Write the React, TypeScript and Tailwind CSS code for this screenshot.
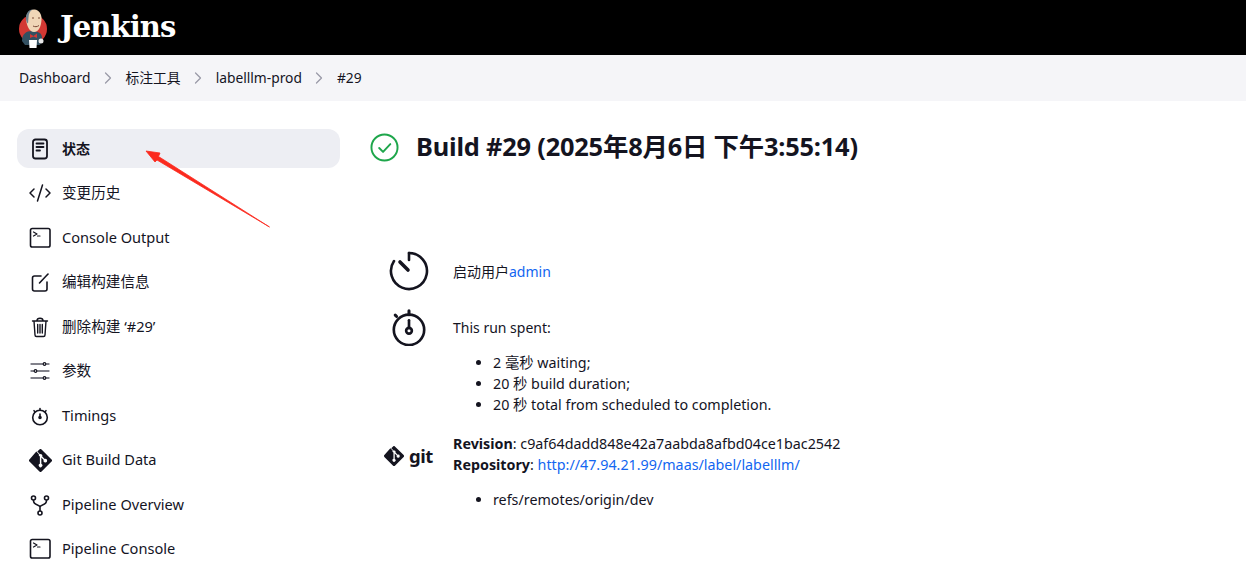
import { ReactNode } from 'react'
import { ChevronRight, Code2 } from 'lucide-react'

const font = '[font-family:"Noto_Sans","Noto_Sans_CJK_SC",sans-serif]'

function Icon({ children, className = 'w-6 h-6' }: { children: ReactNode; className?: string }) {
  return (
    <svg viewBox="0 0 24 24" fill="none" stroke="#14141f" strokeWidth="1.6" strokeLinecap="round" strokeLinejoin="round" className={className}>
      {children}
    </svg>
  )
}

const GitDiamond = ({ className }: { className: string }) => (
  <svg viewBox="0 0 24 24" className={className}>
    <path fill="#14141f" d="M23.55 10.93 13.07.45a1.55 1.55 0 0 0-2.19 0L8.7 2.63l2.76 2.76a1.84 1.84 0 0 1 2.33 2.35l2.66 2.66a1.84 1.84 0 1 1-1.1 1.04l-2.48-2.48v6.53a1.84 1.84 0 1 1-1.52-.05V7.85a1.84 1.84 0 0 1-1-2.42L7.63 2.7.45 10.88a1.55 1.55 0 0 0 0 2.19l10.48 10.48a1.55 1.55 0 0 0 2.19 0l10.43-10.43a1.55 1.55 0 0 0 0-2.19" />
  </svg>
)

const Terminal = () => (
  <Icon>
    <rect x="2.500" y="2.500" width="19.500" height="18.500" rx="1.800" />
    <path d="m5.500 6 3.500 2-3.500 2M9.500 10h2.500" strokeWidth="1.200" />
  </Icon>
)

const Timer = () => (
  <Icon>
    <circle cx="12" cy="13.500" r="7.300" />
    <path d="M12 6V4.500M12 13.500V10M6.800 7.500l-.8-.8M17.200 7.500l.8-.8" />
    <circle cx="12" cy="13.500" r="1" fill="#14141f" />
  </Icon>
)

const items: { label: string; icon: ReactNode; active?: boolean }[] = [
  {
    label: '状态',
    active: true,
    icon: (
      <Icon>
        <rect x="5" y="2.500" width="14" height="19" rx="2.500" strokeWidth="1.800" />
        <path d="M8.500 6.500h7M8.500 10h7M8.500 13.500h3.500" strokeWidth="1.800" />
      </Icon>
    ),
  },
  { label: '变更历史', icon: <Code2 className="w-6 h-6 text-[#14141f]" strokeWidth={1.5} /> },
  { label: 'Console Output', icon: <Terminal /> },
  {
    label: '编辑构建信息',
    icon: (
      <Icon>
        <path d="M13 6H6.500a2 2 0 0 0-2 2v11a2 2 0 0 0 2 2H17a2 2 0 0 0 2-2v-7" />
        <path d="m11.500 13 8.500-9" />
      </Icon>
    ),
  },
  {
    label: '删除构建 ‘#29’',
    icon: (
      <Icon>
        <path d="M4.500 6h15M9 5.500c0-3 6-3 6 0M6 6l1 14a1.500 1.500 0 0 0 1.500 1.500h7A1.500 1.500 0 0 0 17 20l1-14M9.700 9.500v8.500M12 9.500v8.500M14.300 9.500v8.500" strokeWidth="1.400" />
      </Icon>
    ),
  },
  {
    label: '参数',
    icon: (
      <Icon>
        <path d="M3 5h12M18 5h3M3 12h3M9 12h12M3 19h12M18 19h3" strokeWidth="1.300" stroke="#5a5a66" />
        <circle cx="16.500" cy="5" r="1.300" strokeWidth="1.200" />
        <circle cx="7.500" cy="12" r="1.300" strokeWidth="1.200" />
        <circle cx="16.500" cy="19" r="1.300" strokeWidth="1.200" />
      </Icon>
    ),
  },
  { label: 'Timings', icon: <Timer /> },
  { label: 'Git Build Data', icon: <GitDiamond className="w-[23px] h-[23px]" /> },
  {
    label: 'Pipeline Overview',
    icon: (
      <Icon>
        <circle cx="5.500" cy="5" r="2" />
        <circle cx="18.500" cy="5" r="2" />
        <circle cx="12" cy="20" r="2" />
        <path d="M5.500 7.500c0 5.500 6.500 3.500 6.500 6.500v3.500M18.500 7.500c0 5.500-6.500 3.500-6.500 6.500" />
      </Icon>
    ),
  },
  { label: 'Pipeline Console', icon: <Terminal /> },
]

const crumbs = ['Dashboard', '标注工具', 'labelllm-prod', '#29']

function Logo() {
  return (
    <svg viewBox="0 0 30 40" className="w-[30px] h-[40px]">
      <circle cx="15" cy="21" r="14" fill="#d33833" />
      <path d="M4 33c0-7 4-10 10-10s10 2 10 7l-2 7H7z" fill="#335061" />
      <path d="M8 11c0-6 4-10 8.500-9.500S24 6 23.500 12 21 24 16 24 8.500 17 8 11z" fill="#f0d6b7" />
      <path d="M8 9c.5-5 4-8 7-7.500-3 1-4.500 4-4.500 8l-.5 6c-1.500-1-2.300-4-2-6.500z" fill="#6b7f8c" />
      <path d="M14 10h2M20 10h2M15 18c2 1 4 1 6-.5" stroke="#7a4a36" strokeWidth="1" fill="none" />
      <path d="m12 26 3.500 2 3.500-2.500V30l-3.500-1.500L12 30z" fill="#d33833" />
      <path d="M11 32h8l-.5 8h-7z" fill="#fff" />
      <circle cx="23" cy="33" r="2.500" fill="#e8e8e8" />
    </svg>
  )
}

export default function App() {
  return (
    <div className={`relative h-[574px] overflow-hidden bg-white text-[#14141f] ${font}`}>
      <header className="h-[55px] bg-black flex items-center pl-[18px] gap-[12px]">
        <Logo />
        <span className="text-white text-[29px] font-bold [font-family:'DejaVu_Serif',serif] tracking-[-0.9px] leading-none">Jenkins</span>
      </header>
      <nav className="h-[46px] bg-[#f5f5f8] flex items-center pl-[19px] text-[13.8px]">
        {crumbs.map((c, i) => (
          <div key={c} className="flex items-center">
            {i > 0 && <ChevronRight className="w-[20px] h-[20px] mx-[7.5px] text-[#9a9aa8]" strokeWidth={1.5} />}
            <span>{c}</span>
          </div>
        ))}
      </nav>
      <div className="flex">
        <aside className="w-[323px] ml-[17px] mt-[28px] flex flex-col gap-[5.55px] shrink-0">
          {items.map((it) => (
            <div key={it.label} className={`h-[39px] rounded-[12px] flex items-center pl-[11px] gap-[10px] shrink-0 ${it.active ? 'bg-[#edeef3] font-bold text-[14px]' : 'text-[14.6px]'}`}>
              <span className="w-6 h-6 flex items-center justify-center">{it.icon}</span>
              <span>{it.label}</span>
            </div>
          ))}
        </aside>
        <main className="flex-1 pl-[30px]">
          <div className="flex items-start mt-[30px] gap-[17px]">
            <svg viewBox="0 0 30 30" className="w-[29px] h-[29px] mt-[2px]" fill="none" stroke="#1ea64b" strokeWidth="2" strokeLinecap="round" strokeLinejoin="round">
              <circle cx="15" cy="15" r="13.500" />
              <path d="m9.500 15.500 4 4 7.500-8" />
            </svg>
            <h1 className="text-[25.400px] font-bold leading-[30px] tracking-[-0.2px]">Build #29 (2025年8月6日 下午3:55:14)</h1>
          </div>
          <div className="mt-[89px] text-[14px] leading-[21px]">
            <div className="flex items-center">
              <div className="w-[83px] flex justify-center pr-[6px]">
                <svg viewBox="0 0 40 40" className="w-[40px] h-[40px]" fill="none" stroke="#14141f" strokeWidth="2.600" strokeLinecap="round">
                  <path d="M20 2a18 18 0 1 1-15 8" />
                  <path d="M20 2v7" />
                  <path d="M11 11l8 8" strokeWidth="3.600" />
                </svg>
              </div>
              <p>启动用户<a className="text-[#1266f1]">admin</a></p>
            </div>
            <div className="flex mt-[19px]">
              <div className="w-[83px] flex justify-center pr-[6px]">
                <svg viewBox="0 0 40 40" className="w-[38px] h-[38px] -mt-[2px]" fill="none" stroke="#14141f" strokeWidth="2.800" strokeLinecap="round">
                  <circle cx="20" cy="23" r="16" />
                  <path d="M20 7V3M7 9 5.500 7.500" strokeWidth="3.200" />
                  <path d="M20 13v8" />
                  <circle cx="20" cy="24" r="3" />
                </svg>
              </div>
              <div className="pt-[7px]">
                <p>This run spent:</p>
                <ul className="list-disc pl-[40px] mt-[14px] text-[14.300px]">
                  <li>2 毫秒 waiting;</li>
                  <li>20 秒 build duration;</li>
                  <li>20 秒 total from scheduled to completion.</li>
                </ul>
              </div>
            </div>
            <div className="flex mt-[18px] text-[14.300px]">
              <div className="w-[83px] flex items-start justify-center pt-[13px] gap-[5px] pr-[7px] pl-[1px]">
                <GitDiamond className="w-[20px] h-[20px]" />
                <span className="text-[18.500px] font-bold tracking-[-0.5px] leading-[20px]">git</span>
              </div>
              <div>
                <p><b>Revision</b>: c9af64dadd848e42a7aabda8afbd04ce1bac2542</p>
                <p><b>Repository</b>: <a className="text-[#1266f1]">http://47.94.21.99/maas/label/labelllm/</a></p>
                <ul className="list-disc pl-[40px] mt-[14px]">
                  <li>refs/remotes/origin/dev</li>
                </ul>
              </div>
            </div>
          </div>
        </main>
      </div>
      {/* annotation drawn on top of the screenshot */}
      <svg className="absolute left-0 top-0 w-[1246px] h-[574px] pointer-events-none" viewBox="0 0 1246 574">
        <path d="M269.500 227 L158.500 156.500 L160 153 L146 151 L155 162 L157 160 Z" fill="#fb2a1e" stroke="#fb2a1e" strokeWidth="0.800" strokeLinejoin="round" />
      </svg>
    </div>
  )
}
